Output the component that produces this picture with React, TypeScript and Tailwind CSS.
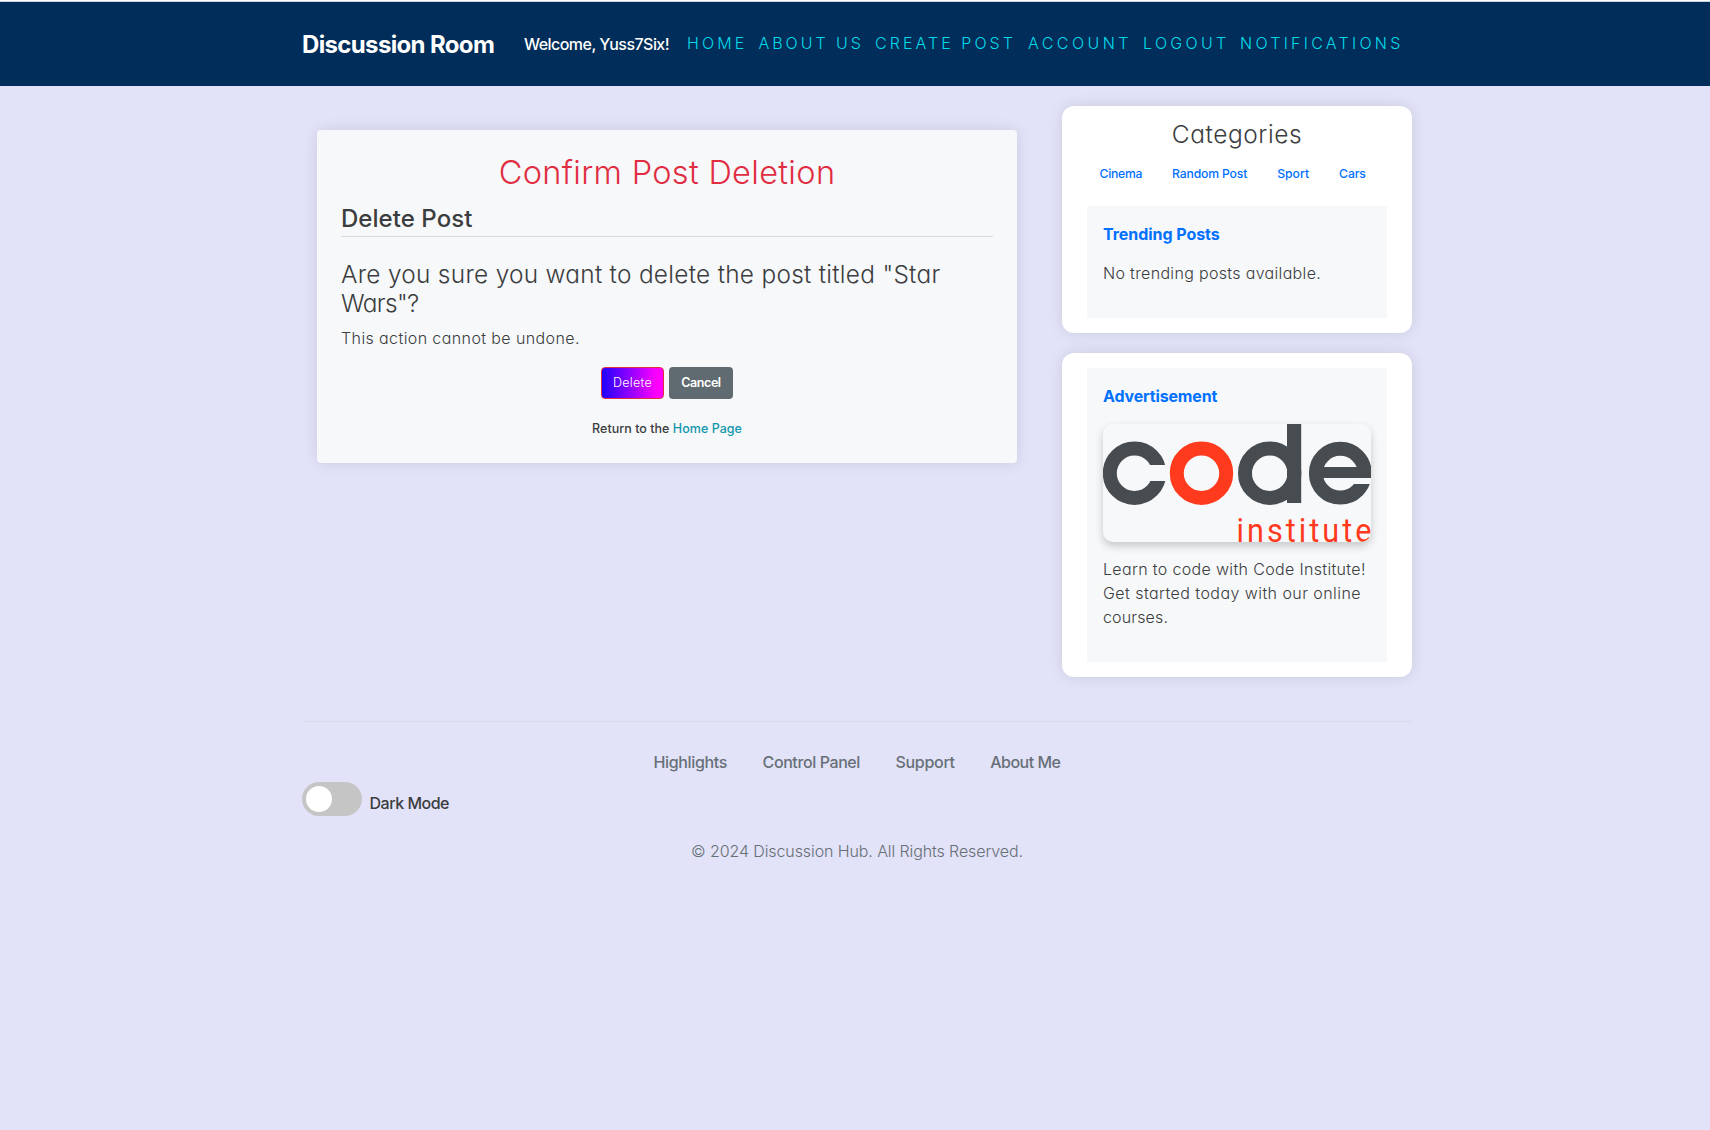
const light = "font-light [font-feature-settings:'cv11','ss03']";

function CodeLogo() {
  return (
    <svg viewBox="0 0 268 118" className="block h-[118px] w-[268px]" role="img" aria-label="code institute">
      <g fill="none" stroke="#464c50" strokeWidth="14">
        <circle cx="31.5" cy="49.2" r="24.7" />
        <circle cx="98.5" cy="49.2" r="24.7" stroke="#ff3a1d" />
        <circle cx="166.7" cy="49.2" r="24.7" />
        <circle cx="237.3" cy="49.2" r="24.4" />
      </g>
      <rect x="40" y="41" width="24" height="16" fill="#f7f8fa" />
      <rect x="184" y="0" width="14.2" height="79" fill="#464c50" />
      <rect x="237" y="53" width="32" height="7" fill="#f7f8fa" />
      <rect x="210" y="43" width="58" height="11" fill="#464c50" />
      <g transform="translate(133.5 117.5) scale(0.9 1)">
        <text fontSize="34" textLength="150" fill="#ff3a1d" className="font-['Roboto']">institute</text>
      </g>
    </svg>
  );
}

const navLinks = [
  { label: "HOME", box: "w-[71.5px] tracking-[3.1px]" },
  { label: "ABOUT US", box: "w-[116.5px] tracking-[2.95px]" },
  { label: "CREATE POST", box: "w-[153px] tracking-[3.05px]" },
  { label: "ACCOUNT", box: "w-[115px] tracking-[3.45px]" },
  { label: "LOGOUT", box: "w-[97px] tracking-[3.3px]" },
  { label: "NOTIFICATIONS", box: "w-[163px] tracking-[3.25px]" },
];

const categories = [
  { label: "Cinema", tracking: "tracking-[-0.28px]" },
  { label: "Random Post", tracking: "tracking-[-0.16px]" },
  { label: "Sport", tracking: "tracking-[0px]" },
  { label: "Cars", tracking: "tracking-[-0.1px]" },
];

const footerLinks = [
  { label: "Highlights", tracking: "tracking-[-0.35px]" },
  { label: "Control Panel", tracking: "tracking-[-0.4px]" },
  { label: "Support", tracking: "tracking-[-0.3px]" },
  { label: "About Me", tracking: "tracking-[-0.5px]" },
];

export default function App() {
  return (
    <div className="min-h-[1130px] bg-[#e2e2f8] font-['Inter',sans-serif] leading-6 text-[#3b3d3e]">
      <div className="h-px bg-white" />
      <header className="h-[85px] border-t border-[#cbd3da] bg-[#002d59] pl-1">
        <nav className="mx-auto flex h-[84px] w-[1110px] items-center">
          <a className="w-[222px] pt-0.5 text-2xl font-bold tracking-[-0.65px] whitespace-nowrap text-white">Discussion Room</a>
          <span className="w-[163px] pb-px font-medium tracking-[-0.54px] whitespace-nowrap text-white">Welcome, Yuss7Six!</span>
          {navLinks.map((n) => (
            <a key={n.label} className={`shrink-0 pb-[3px] font-light whitespace-nowrap text-[#00dbea] ${n.box}`}>{n.label}</a>
          ))}
        </nav>
      </header>

      <div className="pl-1">
        <div className="mx-auto w-[1110px]">
          <div className="flex items-start justify-between">
            <main className="mt-11 ml-[15px] h-[333px] w-[700px] rounded bg-[#f7f8fa] px-6 pt-6 shadow-[0_0_15px_rgba(0,0,0,0.1)]">
              <h1 className={`text-center text-[32.5px] leading-[37px] tracking-[0.33px] text-[#e02d42] ${light}`}>Confirm Post Deletion</h1>
              <h2 className="mt-[13px] border-b border-[#dadcdf] pb-[3px] text-2xl leading-[29px] font-medium tracking-[0.05px]">Delete Post</h2>
              <h3 className={`mt-[23px] text-[24.4px] leading-[29px] ${light}`}>
                <span className="tracking-[0.29px]">Are you sure you want to delete the post titled "Star</span>{" "}
                <span className="tracking-[-0.6px]">Wars"?</span>
              </h3>
              <p className={`mt-2 tracking-[0.4px] ${light}`}>This action cannot be undone.</p>
              <div className="mt-[17px] flex justify-center gap-[5px] text-[12.5px] text-white">
                <button className={`h-8 w-[63px] rounded border border-[#e02d42] bg-[linear-gradient(90deg,#2000ff,#ff00ff_90%)] tracking-[0.28px] ${light}`}>Delete</button>
                <button className="h-8 w-16 rounded bg-[#606b71] font-semibold tracking-[-0.45px]">Cancel</button>
              </div>
              <p className="mt-5 text-center text-[12.5px] leading-[19px] font-medium tracking-[0.03px]">
                Return to the <a className="text-[#1096ad]">Home Page</a>
              </p>
            </main>

            <aside className="mt-5 flex w-[350px] flex-col gap-5">
              <section className="h-[227px] rounded-xl bg-white px-[25px] pt-3.5 shadow-[0_0_15px_rgba(0,0,0,0.1)]">
                <h2 className={`text-center text-[24.5px] leading-[29px] tracking-[0.55px] ${light}`}>Categories</h2>
                <div className="mt-[15px] flex gap-[30px] pl-[12.5px] text-[12.2px] leading-[19px] font-medium text-[#0070ff]">
                  {categories.map((c) => (
                    <a key={c.label} className={c.tracking}>{c.label}</a>
                  ))}
                </div>
                <div className="mt-[23px] h-28 bg-[#f7f8fa] p-4">
                  <h3 className="font-bold tracking-[-0.05px] text-[#0070ff]">Trending Posts</h3>
                  <p className={`mt-[15px] tracking-[0.33px] ${light}`}>No trending posts available.</p>
                </div>
              </section>

              <section className="h-[324px] rounded-xl bg-white px-[25px] pt-[15px] shadow-[0_0_15px_rgba(0,0,0,0.1)]">
                <div className="h-[294px] bg-[#f7f8fa] p-4">
                  <h3 className="font-bold tracking-[-0.15px] text-[#0070ff]">Advertisement</h3>
                  <div className="mt-4 w-[268px] overflow-hidden rounded-[10px] shadow-[0_4px_8px_rgba(0,0,0,0.2)]">
                    <CodeLogo />
                  </div>
                  <p className={`mt-[15px] whitespace-nowrap ${light}`}>
                    <span className="tracking-[0.34px]">Learn to code with Code Institute!</span>
                    <br />
                    <span className="tracking-[0.44px]">Get started today with our online</span>
                    <br />
                    <span className="tracking-[0.15px]">courses.</span>
                  </p>
                </div>
              </section>
            </aside>
          </div>

          <footer className="mt-11 border-t border-[#dadae8] pt-7">
            <div className="flex justify-center gap-[35.5px] font-medium text-[#677077]">
              {footerLinks.map((l) => (
                <a key={l.label} className={l.tracking}>{l.label}</a>
              ))}
            </div>
            <div className="mt-2 flex gap-[7.5px]">
              <div className="h-[34px] w-[60px] rounded-full bg-[#c5c5c5] p-1">
                <div className="size-[26px] rounded-full bg-white" />
              </div>
              <span className="mt-[9px] font-medium tracking-[-0.48px]">Dark Mode</span>
            </div>
            <p className={`mt-[23px] text-center tracking-[-0.1px] text-[#677077] ${light}`}>© 2024 Discussion Hub. All Rights Reserved.</p>
          </footer>
        </div>
      </div>
    </div>
  );
}
